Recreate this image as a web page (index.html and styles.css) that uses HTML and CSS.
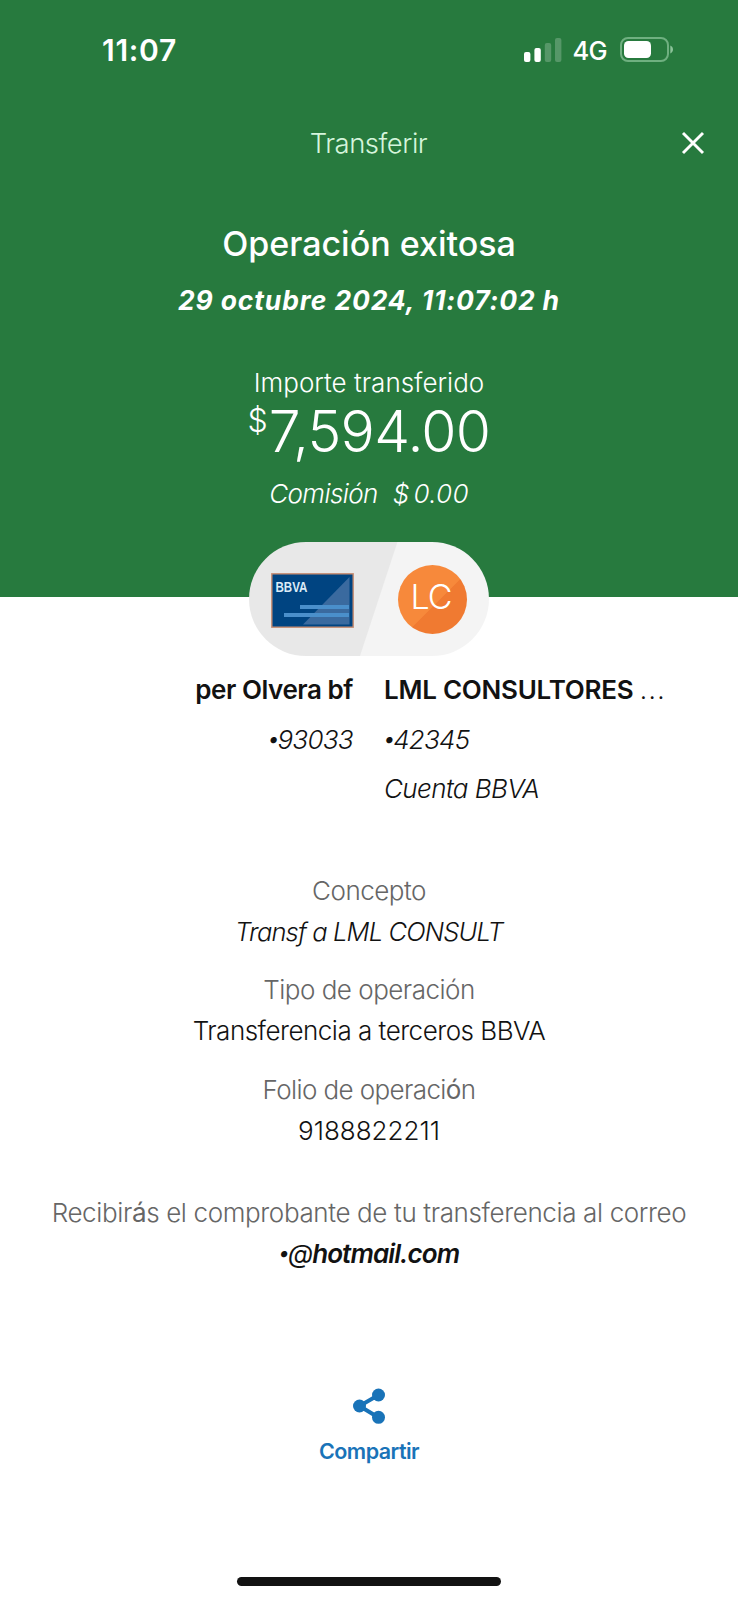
FILE: index.html
```html
<!DOCTYPE html>
<html lang="es">
<head>
<meta charset="utf-8">
<title>Transferir</title>
<link rel="stylesheet" href="styles.css">
</head>
<body>
<div class="screen">
  <header class="hero">
    <div class="status">
      <span class="time">11:07</span>
      <div class="indicators">
        <svg class="signal" width="38" height="25" viewBox="0 0 38 25">
          <rect x="0" y="14" width="6.4" height="10" rx="2" fill="#fff"/>
          <rect x="10.4" y="10" width="6.4" height="14" rx="2" fill="#fff"/>
          <rect x="20.8" y="5" width="6.4" height="19" rx="2" fill="#fff" fill-opacity=".22"/>
          <rect x="31" y="0" width="6.4" height="24" rx="2" fill="#fff" fill-opacity=".22"/>
        </svg>
        <span class="network">4G</span>
        <svg class="battery" width="54" height="25" viewBox="0 0 54 25">
          <rect x="1" y="1" width="47" height="23" rx="7" fill="none" stroke="#6fb080" stroke-width="2"/>
          <rect x="4" y="4" width="27" height="17" rx="4.5" fill="#fff"/>
          <path d="M50.3 8.5C52 9.3 53 10.7 53 12.5S52 15.7 50.3 16.5Z" fill="#8cc39a"/>
        </svg>
      </div>
    </div>
    <nav class="bar">
      <span class="bar-title">Transferir</span>
      <svg class="close" width="24" height="24" viewBox="0 0 24 24"><path d="M2 2 22 22M22 2 2 22" stroke="#fff" stroke-width="2.9" fill="none"/></svg>
    </nav>
    <h1 class="headline">Operación exitosa</h1>
    <p class="date">29 octubre 2024, 11:07:02 h</p>
    <p class="amount-label">Importe transferido</p>
    <p class="amount"><span class="currency">$</span>7,594.00</p>
    <p class="fee"><span>Comisión</span><span class="fee-value"><span class="fee-sign">$</span>0.00</span></p>
  </header>

  <div class="pill">
    <svg class="card" width="84" height="56" viewBox="0 0 84 56">
      <rect x=".8" y=".8" width="81.4" height="53.4" fill="#004481" stroke="#c98e73" stroke-width="1.4"/>
      <path d="M32 51.5 78.5 4V51.5Z" fill="#3a6a9f"/>
      <rect x="29" y="32" width="49" height="4" fill="#4a8fcb"/>
      <rect x="13" y="40" width="65" height="4" fill="#4a8fcb"/>
      <text class="card-brand" x="4.5" y="18.5" textLength="32" lengthAdjust="spacingAndGlyphs">BBVA</text>
    </svg>
    <span class="avatar">LC</span>
  </div>

  <section class="parties">
    <div class="party from">
      <p class="name">per Olvera bf</p>
      <p class="account"><span class="dot">•</span>93033</p>
    </div>
    <div class="party to">
      <p class="name beneficiary">LML CONSULTORES <span class="more">...</span></p>
      <p class="account"><span class="dot">•</span>42345</p>
      <p class="bank">Cuenta BBVA</p>
    </div>
  </section>

  <dl class="details">
    <div class="detail"><dt class="concept">Concepto</dt><dd class="concept-value">Transf a LML CONSULT</dd></div>
    <div class="detail"><dt>Tipo de operación</dt><dd class="type-value">Transferencia a terceros BBVA</dd></div>
    <div class="detail"><dt class="folio">Folio de operaci<span class="accent">ó</span>n</dt><dd class="folio-value">9188822211</dd></div>
  </dl>

  <div class="receipt">
    <p class="receipt-note">Recibir<span class="accent">á</span>s el comprobante de tu transferencia al correo</p>
    <p class="mail"><span class="dot">•</span><span class="at">@</span>hotmail.com</p>
  </div>

  <div class="share">
    <svg width="34" height="36" viewBox="0 0 34 36">
      <path d="M26.5 7 7.5 18 26.5 29.5" fill="none" stroke="#1973b8" stroke-width="4"/>
      <circle cx="26.5" cy="7" r="6.5" fill="#1973b8"/><circle cx="7.5" cy="18" r="6.5" fill="#1973b8"/><circle cx="26.5" cy="29.3" r="6.5" fill="#1973b8"/>
    </svg>
    <span class="share-label">Compartir</span>
  </div>
  <div class="home"></div>
</div>
</body>
</html>
```
FILE: styles.css
```css
*{box-sizing:border-box}
body{margin:0;background:#fff}
p,h1,dl,dd{margin:0}
.screen{width:738px;height:1600px;display:flex;flex-direction:column;align-items:center;background:#fff;color:#121212;font:300 26px/30px Inter,sans-serif;white-space:nowrap;overflow:hidden}
.hero{width:100%;height:597px;flex:none;background:#277a3e;color:#fff;display:flex;flex-direction:column;align-items:center}
.status{width:100%;height:123px;padding:36px 64px 0 102px;display:flex;justify-content:space-between;align-items:flex-start}
.time{font-size:30px;font-weight:600;line-height:28px;letter-spacing:.7px}
.indicators{display:flex;align-items:flex-start;padding-top:1px}
.signal{margin-top:1px;margin-right:10px}
.network{font-size:25.5px;font-weight:500;line-height:28px;letter-spacing:-.6px;margin-right:13px}
.battery{display:block}
.bar{width:100%;height:40px;padding:0 33px 0 56px;display:flex;align-items:center}
.bar-title{flex:1;text-align:center;font-size:27.5px;line-height:38px;letter-spacing:-.5px;color:#d5f5dc}
.headline{margin-top:59px;font-size:34px;line-height:44px;font-weight:500}
.date{margin-top:16px;font-size:26.5px;line-height:36px;font-weight:700;font-style:italic;letter-spacing:.85px}
.amount-label{margin-top:50px}
.amount{margin-top:4px;font-size:57px;line-height:60px;letter-spacing:-.7px;display:flex}
.currency{font-size:32px;line-height:37px;letter-spacing:1px}
.fee{margin-top:17px;font-style:italic;letter-spacing:-.6px;display:flex;gap:15px}
.fee-sign{margin-right:4px}
.fee-value{letter-spacing:.3px}
.pill{flex:none;width:240px;height:114px;margin-top:-55px;border-radius:57px;background:linear-gradient(108.2deg,#e8e8e8 53.3%,#f4f4f4 53.7%);display:flex;justify-content:space-between;align-items:center;padding:0 22px}
.card{margin-top:3px}
.card-brand{font:700 14.5px "Liberation Sans",sans-serif;fill:#dcebf7}
.avatar{width:69px;height:69px;border-radius:50%;background:linear-gradient(135deg,#f7893b 55%,#f07a31 55.5%);color:#fff;font-size:34px;line-height:64px;letter-spacing:-1px;padding-right:3px;text-align:center}
.parties{width:100%;height:158px;margin-top:9px;display:grid;grid-template-columns:353px 353px;column-gap:31px;line-height:49.7px}
.from{text-align:right}
.name{font-weight:600;letter-spacing:-.45px}
.beneficiary{letter-spacing:-.25px}
.more{font-weight:300;letter-spacing:1.5px}
.account{font-style:italic;letter-spacing:-.75px}
.dot{font-weight:500;font-size:20px;line-height:0;vertical-align:3.5px;letter-spacing:-1.5px}
.bank{font-style:italic;letter-spacing:-.6px}
.details{margin-top:46.5px;display:flex;flex-direction:column;gap:17.5px;line-height:41px;text-align:center}
dt{color:#666;letter-spacing:-.5px}
.folio{letter-spacing:-.6px}
.accent{font-weight:400}
.concept-value{font-style:italic;font-size:25.5px;letter-spacing:-.85px}
.type-value{letter-spacing:-.5px}
.receipt{margin-top:41px;line-height:41px;text-align:center}
.receipt-note{color:#666;letter-spacing:-.37px}
.mail{font-weight:600;font-style:italic;letter-spacing:-.9px}
.at{font-weight:400}
.share{margin-top:114px;display:flex;flex-direction:column;align-items:center;gap:12px;color:#1973b8}
.share-label{font-size:21.5px;line-height:30px;font-weight:600;letter-spacing:-.55px}
.home{width:264px;height:9px;margin-top:auto;margin-bottom:14px;border-radius:5px;background:#121212}
```
